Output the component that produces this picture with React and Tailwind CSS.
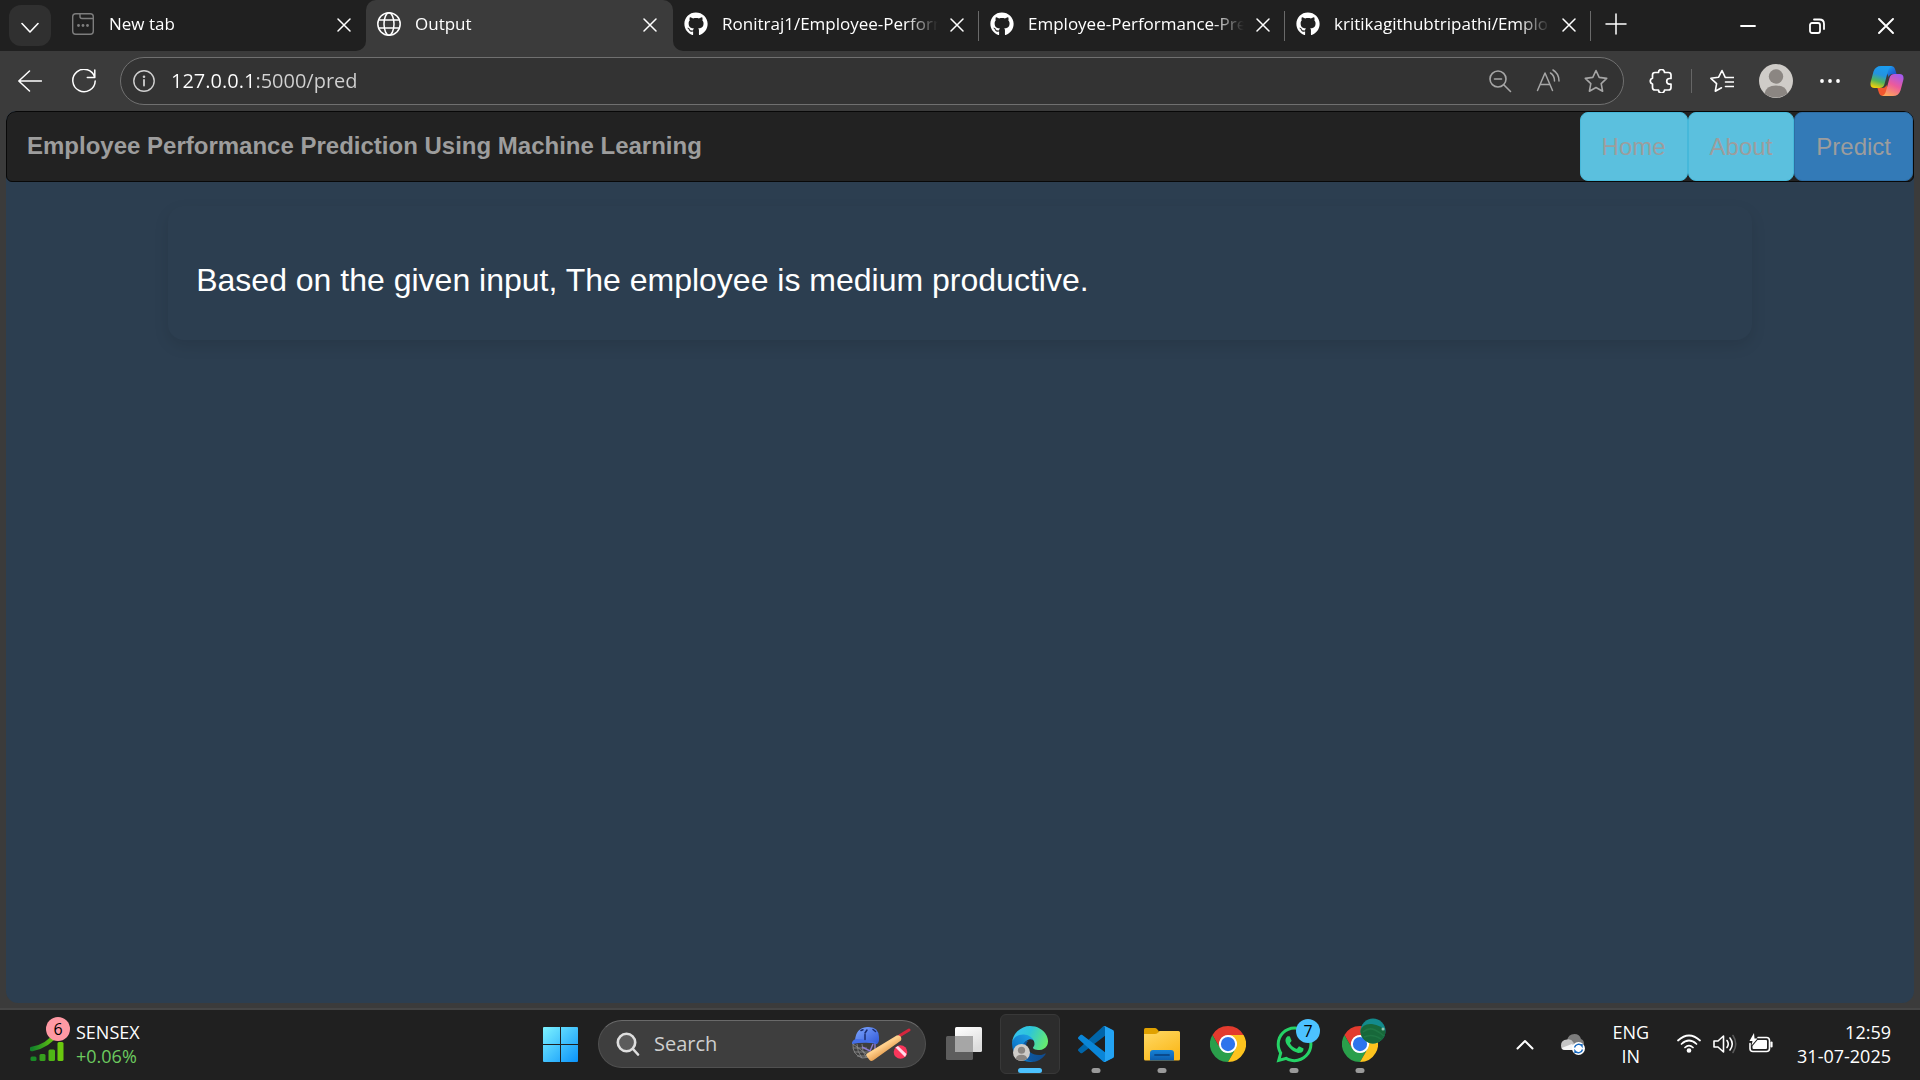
import React from "react";
import { FaGithub, FaWhatsapp } from "react-icons/fa";

const line = { fill: "none", stroke: "currentColor", strokeLinecap: "round", strokeLinejoin: "round" };

function CloseIcon() {
  return (
    <svg width="14" height="14" viewBox="0 0 14 14" {...line} strokeWidth="1.5">
      <path d="M1 1l12 12M13 1L1 13" />
    </svg>
  );
}

function NewTabIcon() {
  return (
    <svg width="24" height="24" viewBox="0 0 24 24" {...line} stroke="#7d7d7d" strokeWidth="1.4">
      <rect x="1.7" y="1.7" width="20.6" height="20.6" rx="3" />
      <path d="M9 2v2.5q0 2 2 2h11" />
      <g fill="#7d7d7d" stroke="none">
        <circle cx="7.5" cy="13.5" r="1.4" />
        <circle cx="12" cy="13.5" r="1.4" />
        <circle cx="16.5" cy="13.5" r="1.4" />
      </g>
    </svg>
  );
}

function GlobeIcon() {
  return (
    <svg width="24" height="24" viewBox="0 0 24 24" {...line} strokeWidth="1.5">
      <circle cx="12" cy="12" r="11.2" />
      <ellipse cx="12" cy="12" rx="5" ry="11.2" />
      <path d="M1.8 8h20.4M1.8 16h20.4" />
    </svg>
  );
}

function Tab({ icon, title, active, divider }) {
  return (
    <div className="relative flex h-full w-[306px] items-center pr-[15px] pb-1 pl-[11px]">
      <span className="flex w-6 shrink-0 text-white">{icon}</span>
      <button
        type="button"
        role="tab"
        aria-selected={active}
        className="ml-3.5 min-w-0 flex-1 overflow-hidden text-left text-[17px] leading-6 whitespace-nowrap text-white [mask-image:linear-gradient(90deg,#000_calc(100%-32px),transparent)]"
      >
        {title}
      </button>
      <button type="button" aria-label={"Close " + title} className="ml-3 flex shrink-0 pt-0.5 text-white">
        <CloseIcon />
      </button>
      {divider && <span className="absolute top-[11px] right-0 h-[30px] w-px bg-[#6a6a6a]" />}
    </div>
  );
}

function TabStrip() {
  return (
    <div className="flex h-[51px] bg-[#3b3b3b]">
      <div className="flex items-center rounded-br-[10px] bg-[#202020] pl-[9px]">
        <button
          type="button"
          aria-label="Tab actions"
          className="mr-[9px] flex h-[41px] w-[42px] items-center justify-center rounded-xl bg-[#303030] text-white"
        >
          <svg width="18" height="12" viewBox="0 0 18 12" {...line} strokeWidth="1.6" className="mt-1">
            <path d="M1 1.5l8 8.5 8-8.5" />
          </svg>
        </button>
        <Tab icon={<NewTabIcon />} title="New tab" />
      </div>
      <div className="bg-[linear-gradient(#202020_50%,#3b3b3b_50%)]">
        <div className="h-full rounded-t-[10px] bg-[#3b3b3b] pr-px">
          <Tab icon={<GlobeIcon />} title="Output" active />
        </div>
      </div>
      <div className="flex min-w-0 flex-1 items-center rounded-bl-[10px] bg-[#202020] text-white">
        <Tab icon={<FaGithub size={24} />} title="Ronitraj1/Employee-Perform" divider />
        <Tab icon={<FaGithub size={24} />} title="Employee-Performance-Pre" divider />
        <Tab icon={<FaGithub size={24} />} title="kritikagithubtripathi/Emplo" divider />
        <button type="button" aria-label="New tab" className="flex px-3.5 pb-1">
          <svg width="22" height="22" viewBox="0 0 22 22" {...line} strokeWidth="1.5">
            <path d="M11 1v20M1 11h20" />
          </svg>
        </button>
        <div className="ml-auto flex h-full">
          <button type="button" aria-label="Minimize" className="flex w-[69px] items-center justify-center">
            <svg width="16" height="16" viewBox="0 0 16 16" {...line} strokeWidth="1.8">
              <path d="M1 8h14" />
            </svg>
          </button>
          <button type="button" aria-label="Restore" className="flex w-[69px] items-center justify-center">
            <svg width="16" height="16" viewBox="0 0 16 16" {...line} strokeWidth="1.8">
              <rect x="1" y="5" width="10" height="10" rx="2" />
              <path d="M5 1.5h5.500q4.500 0 4.500 4.500v5" />
            </svg>
          </button>
          <button type="button" aria-label="Close" className="flex w-[69px] items-center justify-center">
            <svg width="16" height="16" viewBox="0 0 16 16" {...line} strokeWidth="1.9">
              <path d="M1 1l14 14M15 1L1 15" />
            </svg>
          </button>
        </div>
      </div>
    </div>
  );
}

const STAR = "M12 1.500l3.200 6.900 7.500 1-5.500 5.200 1.400 7.600-6.600-3.700-6.600 3.700 1.400-7.600L1.300 9.400l7.500-1z";

function CopilotIcon() {
  return (
    <svg width="34" height="34" viewBox="0 0 34 34">
      <defs>
        <linearGradient id="cpA" x1="0.6" y1="0" x2="0.3" y2="1">
          <stop offset="0" stopColor="#1b9df0" />
          <stop offset="0.4" stopColor="#2493e0" />
          <stop offset="0.7" stopColor="#52b45a" />
          <stop offset="1" stopColor="#f2cf0b" />
        </linearGradient>
        <linearGradient id="cpB" x1="0.8" y1="0" x2="0.3" y2="1">
          <stop offset="0" stopColor="#a15af0" />
          <stop offset="0.5" stopColor="#ec5a9c" />
          <stop offset="1" stopColor="#fda65c" />
        </linearGradient>
        <linearGradient id="cpC" x1="0" y1="0" x2="1" y2="1">
          <stop offset="0" stopColor="#1fb2f5" />
          <stop offset="1" stopColor="#1c3fc4" />
        </linearGradient>
      </defs>
      <path d="M14 2h7q3 0 4 3l1.600 5h-4q-3 0-4 3z" fill="url(#cpC)" />
      <path d="M20 32h-7q-3 0-4-3l-1.600-5h5q3 0 4-3z" fill="#f2572f" />
      <path d="M11 2h11q-3 1-4 5l-3.500 13q-1 4-5 4H4.500Q-.5 24 .7 18L3.500 7.500Q5.500 2 11 2z" fill="url(#cpA)" />
      <path d="M23 32H12q3-1 4-5l3.500-13q1-4 5-4h5q5 0 3.800 6l-2.800 10.500Q28.500 32 23 32z" fill="url(#cpB)" />
    </svg>
  );
}

function PersonIcon({ size }) {
  return (
    <svg width={size} height={size} viewBox="0 0 34 34">
      <circle cx="17" cy="17" r="17" fill="#cfccc8" />
      <circle cx="17" cy="12.500" r="7.200" fill="#8b8682" />
      <path d="M5.500 29.500Q7 21.500 17 21.500t11.500 8Q23.500 33.500 17 33.500T5.500 29.500z" fill="#8b8682" />
    </svg>
  );
}

function Toolbar() {
  return (
    <div className="flex h-[60px] items-center bg-[#3b3b3b] pr-4 pl-[18px] text-white">
      <button type="button" aria-label="Back" className="flex w-6">
        <svg width="24" height="24" viewBox="0 0 24 24" {...line} strokeWidth="1.5">
          <path d="M23.500 12H0.800M11.500 2L0.800 12l10.700 10" />
        </svg>
      </button>
      <button type="button" aria-label="Refresh" className="ml-[30px] flex w-6">
        <svg width="24" height="24" viewBox="0 0 24 24" {...line} strokeWidth="1.5">
          <path d="M22.800 8.500A11.200 11.200 0 1 0 23.200 12M22.800 1v7.500h-7.500" />
        </svg>
      </button>
      <div className="ml-6 flex h-12 min-w-0 flex-1 items-center rounded-full border border-[#707070] bg-[#333333] pr-[15px] pl-3">
        <button type="button" aria-label="Site information" className="flex text-[#d0d0d0]">
          <svg width="22" height="22" viewBox="0 0 22 22" {...line} strokeWidth="1.4">
            <circle cx="11" cy="11" r="10.200" />
            <path d="M11 10v5.500" strokeWidth="1.800" />
            <circle cx="11" cy="6.800" r="0.600" />
          </svg>
        </button>
        <input
          type="text"
          aria-label="Address"
          defaultValue="127.0.0.1:5000/pred"
          className="ml-4 min-w-0 flex-1 bg-[linear-gradient(90deg,#fff_85px,#d2d2d2_85px)] bg-clip-text text-xl leading-7 text-transparent outline-none"
        />
        <div className="flex gap-6 text-[#a6a6a6]">
          <button type="button" aria-label="Zoom out" className="flex">
            <svg width="24" height="24" viewBox="0 0 24 24" {...line} strokeWidth="1.600">
              <circle cx="10" cy="10" r="8" />
              <path d="M16 16l6.500 6.500M6.500 10h7" />
            </svg>
          </button>
          <button type="button" aria-label="Read aloud" className="flex">
            <svg width="24" height="24" viewBox="0 0 24 24" {...line} strokeWidth="1.500">
              <path d="M1.500 21.500L9 4l7.500 17.500M4 15.500h10M14.500 4q4 2.500 4 8M17 1q6 3.500 6 11" />
            </svg>
          </button>
          <button type="button" aria-label="Add to favorites" className="flex">
            <svg width="24" height="24" viewBox="0 0 24 24" {...line} strokeWidth="1.600">
              <path d={STAR} />
            </svg>
          </button>
        </div>
      </div>
      <button type="button" aria-label="Extensions" className="ml-[25px] flex">
        <svg width="24" height="24" viewBox="0 0 24 24" {...line} strokeWidth="1.700">
          <path d="M6 3.500h3.500a3 3 0 0 1 6 0H19.500q2.500 0 2.500 2.500v3.500h-1.500a2.800 2.800 0 1 0 0 5.600H22v3.400q0 2.500-2.500 2.500h-4a3 3 0 0 1-6 0H6q-2.500 0-2.500-2.500V15a3 3 0 0 1 0-5.800V6Q3.500 3.500 6 3.500z" />
        </svg>
      </button>
      <span className="mx-[18px] h-6 w-px bg-[#666666]" />
      <button type="button" aria-label="Favorites" className="flex">
        <svg width="24" height="24" viewBox="0 0 24 24" {...line} strokeWidth="1.600">
          <path d="M11.500 18.800l-6.200 3.400 1.300-7.500L0.900 9.300l7.600-1L12 1.500l3.200 6.800M15.500 8.500h8M15.500 13h8M15.500 17.500h8" />
        </svg>
      </button>
      <button type="button" aria-label="Profile" className="ml-[25px] flex">
        <PersonIcon size={34} />
      </button>
      <button type="button" aria-label="Settings and more" className="ml-[26px] flex">
        <svg width="22" height="22" viewBox="0 0 22 22" fill="currentColor">
          <circle cx="3" cy="11" r="1.900" />
          <circle cx="11" cy="11" r="1.900" />
          <circle cx="19" cy="11" r="1.900" />
        </svg>
      </button>
      <button type="button" aria-label="Copilot" className="ml-[29px] flex">
        <CopilotIcon />
      </button>
    </div>
  );
}

function WebPage() {
  const link = "flex items-center rounded-lg border px-[21px] text-2xl text-[#9d9d9d]";
  return (
    <div className="mx-1.5 flex-1 overflow-hidden rounded-t-[10px] rounded-b-xl bg-[#2c3e50] font-['Liberation_Sans',Arial,sans-serif]">
      <nav className="flex h-[71px] justify-between rounded-t-[10px] rounded-b-md border border-[#080808] bg-[#222222]">
        <a href="#top" className="flex items-center pb-0.5 pl-5 text-2xl font-bold text-[#9d9d9d]">
          Employee Performance Prediction Using Machine Learning
        </a>
        <div className="flex">
          <a href="#home" className={link + " border-[#46b8da] bg-[#5bc0de]"}>Home</a>
          <a href="#about" className={link + " border-[#46b8da] bg-[#5bc0de]"}>About</a>
          <a href="#predict" className={link + " border-[#2e6da4] bg-[#337ab7]"}>Predict</a>
        </div>
      </nav>
      <main className="mx-auto mt-6 w-[83%] rounded-2xl px-7 pt-[54px] pb-10 shadow-[0_6px_15px_rgba(0,0,0,0.1)]">
        <h1 className="text-[32px] leading-10 text-white">
          Based on the given input, The employee is medium productive.
        </h1>
      </main>
    </div>
  );
}

function SensexIcon() {
  return (
    <svg width="34" height="34" viewBox="0 0 34 34">
      <defs>
        <linearGradient id="sx" x1="0" y1="0" x2="1" y2="0">
          <stop offset="0" stopColor="#12822a" />
          <stop offset="1" stopColor="#72cc0c" />
        </linearGradient>
      </defs>
      <path d="M2 22Q18 19 27 6" fill="none" stroke="url(#sx)" strokeWidth="4.500" strokeLinecap="round" />
      <rect x="0.500" y="29.500" width="6" height="4.500" rx="1.500" fill="#198a26" />
      <rect x="9.500" y="27" width="6" height="7" rx="1.500" fill="#37a01d" />
      <rect x="18.500" y="22.500" width="6.500" height="11.500" rx="1.500" fill="#4fb516" />
      <rect x="27.500" y="15" width="6" height="19" rx="1.500" fill="#6ac80e" />
    </svg>
  );
}

function WindowsIcon() {
  return (
    <svg width="35" height="35" viewBox="0 0 35 35">
      <defs>
        <linearGradient id="win" gradientUnits="userSpaceOnUse" x1="0" y1="0" x2="35" y2="35">
          <stop offset="0" stopColor="#7df3ff" />
          <stop offset="1" stopColor="#0a93fb" />
        </linearGradient>
      </defs>
      <path d="M1 0h16v17H0V1q0-1 1-1zM18 0h16q1 0 1 1v16H18zM0 18h17v17H1q-1 0-1-1zM18 18h17v16q0 1-1 1H18z" fill="url(#win)" />
    </svg>
  );
}

function CricketIcon() {
  return (
    <svg width="60" height="36" viewBox="0 0 60 36">
      <defs>
        <linearGradient id="helm" x1="0" y1="0" x2="1" y2="1">
          <stop offset="0" stopColor="#7fa8ff" />
          <stop offset="1" stopColor="#2f57d8" />
        </linearGradient>
        <linearGradient id="bat" x1="0.3" y1="0.3" x2="0.7" y2="0.8">
          <stop offset="0.3" stopColor="#ffd08c" />
          <stop offset="0.8" stopColor="#e39a4c" />
        </linearGradient>
      </defs>
      <g fill="none" stroke="#8f8f8f" strokeWidth="0.800">
        <path d="M2 18q-1 10 9 14l9-1M2 22h14M3 26h15M6 30h13M6 18q0 8 5 14M11 18q0 8 4 13M2 18l16 12" />
      </g>
      <path d="M22 18l-3 7-8-4M24 17v7l-5 5" fill="none" stroke="#8d7bd0" strokeWidth="1.400" />
      <path d="M4 15Q4.500 2 16 1t12 10q.5 6-2.500 7-11-3-21.500-3z" fill="url(#helm)" />
      <path d="M4.500 13q11.500 0 22.500 4.500Q12 16 1 18q-.5-3 3.500-5z" fill="#456fe8" />
      <path d="M14 8.500v5M10 4.500l2-.7M22 3.500l2.500 2M16 4l-2 3" stroke="#1b2c6e" strokeWidth="1.500" strokeLinecap="round" />
      <path d="M49 9.500L58 4" stroke="#d7263d" strokeWidth="3" strokeLinecap="round" />
      <path d="M44 10.500q3-2 5-.500t1 4.500L22 34.500q-2 1-3.500-.5L15.500 30q-1-1.500.5-2.500z" fill="url(#bat)" />
      <circle cx="49.500" cy="26" r="6.800" fill="#f9365b" />
      <path d="M44.500 21.500l2.500-1.500 8.500 8-1.500 3z" fill="#ffdcea" />
    </svg>
  );
}

function TaskViewIcon() {
  return (
    <svg width="36" height="36" viewBox="0 0 36 36">
      <defs>
        <linearGradient id="tv" x1="0" y1="0" x2="0.500" y2="1">
          <stop offset="0" stopColor="#ffffff" />
          <stop offset="1" stopColor="#dcdcdc" />
        </linearGradient>
      </defs>
      <rect x="0" y="10" width="27" height="24" rx="1.500" fill="#5d5d5d" />
      <rect x="9" y="1" width="27" height="25" rx="1.500" fill="url(#tv)" />
      <path d="M9 10h18v16H9z" fill="#a6a6a6" />
    </svg>
  );
}

function EdgeIcon() {
  return (
    <svg width="36" height="36" viewBox="0 0 256 256">
      <defs>
        <linearGradient id="eA" x1="0.250" y1="0.500" x2="1" y2="0.500">
          <stop offset="0" stopColor="#0c59a4" />
          <stop offset="1" stopColor="#114a8b" />
        </linearGradient>
        <linearGradient id="eB" x1="0.900" y1="0.300" x2="0.300" y2="1">
          <stop offset="0" stopColor="#1b9de2" />
          <stop offset="0.500" stopColor="#1383d3" />
          <stop offset="1" stopColor="#0667b5" />
        </linearGradient>
        <linearGradient id="eC" x1="0" y1="0.300" x2="1" y2="0.600">
          <stop offset="0" stopColor="#35c1f1" />
          <stop offset="0.450" stopColor="#2ec6d8" />
          <stop offset="1" stopColor="#66eb6e" />
        </linearGradient>
      </defs>
      <path fill="url(#eA)" d="M235.680 195.460a93.730 93.730 0 0 1-10.540 4.710a101.870 101.870 0 0 1-35.900 6.460c-47.320 0-88.540-32.550-88.540-74.320A31.480 31.480 0 0 1 117.130 105c-42.800 1.800-53.800 46.400-53.800 72.530c0 73.880 68.090 78.370 82.760 78.370c7.910 0 19.840-2.300 27-4.560l1.310-.44a128.340 128.340 0 0 0 66.600-52.800a4 4 0 0 0-5.320-2.640z" />
      <path fill="url(#eB)" d="M105.730 241.420A79.200 79.200 0 0 1 83 220.080a80.720 80.720 0 0 1 29.530-120.600c4.060-1.910 11.100-5.270 20.410-5.150a32.370 32.370 0 0 1 25.690 13a31.880 31.880 0 0 1 6.360 18.660c0-.21 24.460-79.600-80-79.600c-43.900 0-84.800 41.660-84.800 78.210a130.150 130.150 0 0 0 12.110 56a128 128 0 0 0 156.380 67.110a75.550 75.550 0 0 1-62.780-6z" />
      <path fill="url(#eC)" d="M152.330 148.860c-.81 1.050-3.300 2.500-3.300 5.660c0 2.610 1.700 5.120 4.720 7.230c14.380 10 41.490 8.680 41.560 8.680a59.560 59.560 0 0 0 30.270-8.350a61.380 61.380 0 0 0 30.430-52.880c.26-22.410-8-37.310-11.340-43.910C223.320 23.910 177.570.29 127.820.29a128 128 0 0 0-128 126.200c.48-36.540 36.800-66.050 80-66.050c3.500 0 23.460.34 42 10.070c16.340 8.580 24.900 18.940 30.850 29.210c6.180 10.670 7.280 24.150 7.280 29.520s-2.740 13.330-7.620 19.620z" />
    </svg>
  );
}

function VsCodeIcon() {
  return (
    <svg width="36" height="36" viewBox="0 0 100 100">
      <path fill="#0065a9" d="M96.461 10.796L75.857.876C73.472-.273 70.622.212 68.750 2.083L1.299 63.583c-1.815 1.654-1.813 4.511.004 6.162l5.510 5.009c1.485 1.350 3.722 1.450 5.321.237l81.227-61.621C96.086 11.303 100 13.246 100 16.667v-.24c0-2.401-1.375-4.590-3.539-5.631z" />
      <path fill="#0a86d8" d="M96.461 89.204l-20.604 9.921c-2.385 1.148-5.235.663-7.107-1.208L1.299 36.417c-1.815-1.654-1.813-4.511.004-6.162l5.510-5.009c1.485-1.350 3.722-1.450 5.321-.237L93.361 86.630C96.086 88.697 100 86.754 100 83.333v.24c0 2.401-1.375 4.590-3.539 5.631z" />
      <path fill="#23a3f3" d="M75.858 99.126c-2.386 1.148-5.236.662-7.108-1.210 2.306 2.307 6.250.674 6.250-2.588V4.672c0-3.262-3.944-4.895-6.250-2.589 1.872-1.872 4.722-2.357 7.108-1.209l20.601 9.907C98.623 11.822 100 14.011 100 16.413v67.174c0 2.402-1.377 4.592-3.541 5.633z" />
    </svg>
  );
}

function FolderIcon() {
  return (
    <svg width="36" height="36" viewBox="0 0 36 36">
      <defs>
        <linearGradient id="fo" x1="0" y1="0" x2="0.600" y2="1">
          <stop offset="0" stopColor="#ffd965" />
          <stop offset="1" stopColor="#fbb91c" />
        </linearGradient>
        <linearGradient id="fb" x1="0" y1="0" x2="0" y2="1">
          <stop offset="0" stopColor="#1583d8" />
          <stop offset="1" stopColor="#0d5cab" />
        </linearGradient>
      </defs>
      <path d="M1.500 2H11q1 0 2 1l2 2.500-3 4H0v-6Q0 2 1.500 2z" fill="#e0a100" />
      <path d="M0 8h11q1.500 0 3-1.500L15.500 5H34.500Q36 5 36 6.500V33q0 1.500-1.500 1.500h-33Q0 34.500 0 33z" fill="url(#fo)" />
      <path d="M6 34.500V27q0-3 3-3h18q3 0 3 3v7.500z" fill="url(#fb)" />
      <path d="M11 29h14" stroke="#0a4a8c" strokeWidth="1.800" strokeLinecap="round" />
    </svg>
  );
}

function ChromeIcon() {
  return (
    <svg width="36" height="36" viewBox="0 0 48 48">
      <circle cx="24" cy="24" r="13" fill="#fff" />
      <path fill="#e33b2e" d="M24 12h20.781A23.994 23.994 0 0 0 3.217 12.003L13.608 30l.009-.002A11.985 11.985 0 0 1 24 12z" />
      <path fill="#2a9f4b" d="M13.609 30.003L3.218 12.006A23.994 23.994 0 0 0 24.003 48l10.390-17.997-.007-.007a11.985 11.985 0 0 1-20.778.007z" />
      <path fill="#fcc31e" d="M34.391 30.003L24.001 48A23.994 23.994 0 0 0 44.780 12.003H23.999l-.003.009a11.985 11.985 0 0 1 10.395 17.991z" />
      <circle cx="24" cy="24" r="9.500" fill="#2d74ec" />
    </svg>
  );
}

function TaskButton({ label, active, running, children }) {
  return (
    <button
      type="button"
      aria-label={label}
      className={
        active
          ? "relative flex h-[60px] w-[60px] items-center justify-center rounded-md border border-[#383838] bg-[#2c2c2c]"
          : "relative flex h-[60px] w-[60px] items-center justify-center"
      }
    >
      {children}
      {active && <span className="absolute bottom-0 left-1/2 h-[5px] w-6 -translate-x-1/2 rounded-full bg-[#4cc2ff]" />}
      {running && <span className="absolute bottom-px left-1/2 h-[5px] w-[9px] -translate-x-1/2 rounded-full bg-[#9a9a9a]" />}
    </button>
  );
}

function Taskbar() {
  return (
    <footer className="grid h-[72px] grid-cols-[1fr_auto_1fr] items-center border-t-2 border-[#454545] bg-[#202020] pb-0.5 text-lg leading-6 text-white">
      <button type="button" className="flex items-center gap-3 justify-self-start pl-[30px] text-left">
        <span className="relative flex">
          <SensexIcon />
          <span className="absolute -top-2.5 left-4 flex h-6 w-6 items-center justify-center rounded-full bg-[#ff99a4] text-base text-black">
            6
          </span>
        </span>
        <span className="flex flex-col">
          <span>SENSEX</span>
          <span className="text-[#6ccb5f]">+0.06%</span>
        </span>
      </button>

      <div className="flex items-center gap-1.5">
        <TaskButton label="Start"><WindowsIcon /></TaskButton>
        <div className="mx-0.5 flex h-12 w-[328px] items-center rounded-full border border-[#505050] border-t-[#6a6a6a] bg-[#3e3e3e] pr-3.5 pl-[17px]">
          <svg width="24" height="24" viewBox="0 0 24 24" fill="none" stroke="#dedede" strokeWidth="2.600" strokeLinecap="round">
            <circle cx="10.500" cy="10.500" r="8.700" fill="#5c5c5c" />
            <path d="M17 17l5 5.500" />
          </svg>
          <input
            type="text"
            aria-label="Search"
            placeholder="Search"
            className="mx-3.5 min-w-0 flex-1 bg-transparent text-xl leading-7 outline-none placeholder:text-[#cfcfcf]"
          />
          <CricketIcon />
        </div>
        <TaskButton label="Task view"><TaskViewIcon /></TaskButton>
        <TaskButton label="Microsoft Edge" active>
          <EdgeIcon />
          <span className="absolute bottom-3 left-3"><PersonIcon size={17} /></span>
        </TaskButton>
        <TaskButton label="Visual Studio Code" running><VsCodeIcon /></TaskButton>
        <TaskButton label="File Explorer" running><FolderIcon /></TaskButton>
        <TaskButton label="Google Chrome"><ChromeIcon /></TaskButton>
        <TaskButton label="WhatsApp" running>
          <FaWhatsapp size={41} color="#25d366" className="shrink-0" />
          <span className="absolute top-[5px] right-1 flex h-6 w-6 items-center justify-center rounded-full bg-[#4cc2ff] text-base text-black">
            7
          </span>
        </TaskButton>
        <TaskButton label="Google Chrome profile" running>
          <ChromeIcon />
          <svg width="26" height="26" viewBox="0 0 26 26" className="absolute top-1 right-1">
            <defs>
              <clipPath id="pf"><circle cx="13" cy="13" r="12.500" /></clipPath>
            </defs>
            <g clipPath="url(#pf)">
              <path d="M0 0h26v26H0z" fill="#138a8c" />
              <path d="M0 13Q3 5 12 6t14 8v12H0z" fill="#17683a" />
              <path d="M3 14q6-5 12-2t9 6M4 19q8-4 17 2" stroke="#1f7544" strokeWidth="1.500" fill="none" />
              <circle cx="23" cy="11" r="1.500" fill="#8fc4b0" />
            </g>
          </svg>
        </TaskButton>
      </div>

      <div className="flex items-center justify-self-end pr-[29px]">
        <button type="button" aria-label="Show hidden icons" className="flex">
          <svg width="18" height="11" viewBox="0 0 18 11" {...line} strokeWidth="2">
            <path d="M1.500 9.500L9 2l7.500 7.500" />
          </svg>
        </button>
        <button type="button" aria-label="OneDrive" className="ml-[26px] flex">
          <svg width="26" height="24" viewBox="0 0 26 24">
            <path d="M7 9q1-7 7.500-7 5 0 6.500 5 3 1 3 5l-12 5z" fill="#7c7c7c" />
            <path d="M1 13.500Q1 8 7 7.500q4-1 6.500 3L16 18H5q-4 0-4-4.500z" fill="#c4c4c4" />
            <path d="M1.500 16L12 12l5 6H5q-2.500 0-3.500-2z" fill="#f5f5f5" />
            <circle cx="18.500" cy="16.500" r="6.500" fill="#fff" />
            <path d="M14.500 15.500a4.200 4.200 0 0 1 7.500-1.500v-2M22.500 17.500a4.200 4.200 0 0 1-7.500 1.500v2" fill="none" stroke="#1769c0" strokeWidth="1.400" />
          </svg>
        </button>
        <button type="button" className="ml-[26px] flex flex-col items-center">
          <span>ENG</span>
          <span>IN</span>
        </button>
        <button type="button" aria-label="Network, volume and battery" className="ml-7 flex items-center gap-3">
          <svg width="24" height="20" viewBox="0 0 24 20" {...line} strokeWidth="1.700">
            <path d="M1 6.500q11-10 22 0M4.500 10q7.500-7 15 0M8 13.500q4-3.800 8 0" />
            <circle cx="12" cy="16.500" r="1.500" fill="currentColor" />
          </svg>
          <svg width="24" height="20" viewBox="0 0 24 20" {...line} strokeWidth="1.600">
            <path d="M1 7h4l5.500-5v16L5 13H1zM14 6.500q2.500 3.500 0 7M17 4q4.500 6 0 12" />
            <path d="M20 1.500q5.500 8.500 0 17" stroke="#5a5a5a" />
          </svg>
          <svg width="24" height="22" viewBox="0 0 24 22" {...line} strokeWidth="1.600">
            <path d="M9 4.500h8.500q3 0 3 3v8q0 3-3 3H4q-3 0-3-3v-5" />
            <path d="M8.500 7H17q1 0 1 1v7q0 1-1 1H4.500q-1 0-1-1v-2z" fill="currentColor" stroke="none" />
            <path d="M22.500 9.500v4" strokeWidth="2.200" />
            <path d="M5 0L0.500 8H3.500L2.500 12.500 8.500 5.500H5.500z" fill="currentColor" stroke="none" />
          </svg>
        </button>
        <button type="button" className="ml-6 flex flex-col items-end">
          <span>12:59</span>
          <span>31-07-2025</span>
        </button>
      </div>
    </footer>
  );
}

export default function App() {
  return (
    <div className="flex min-h-screen flex-col bg-[#3b3b3b] font-['Open_Sans','Noto_Sans',sans-serif]">
      <TabStrip />
      <Toolbar />
      <WebPage />
      <div className="h-[5px]" />
      <Taskbar />
    </div>
  );
}
